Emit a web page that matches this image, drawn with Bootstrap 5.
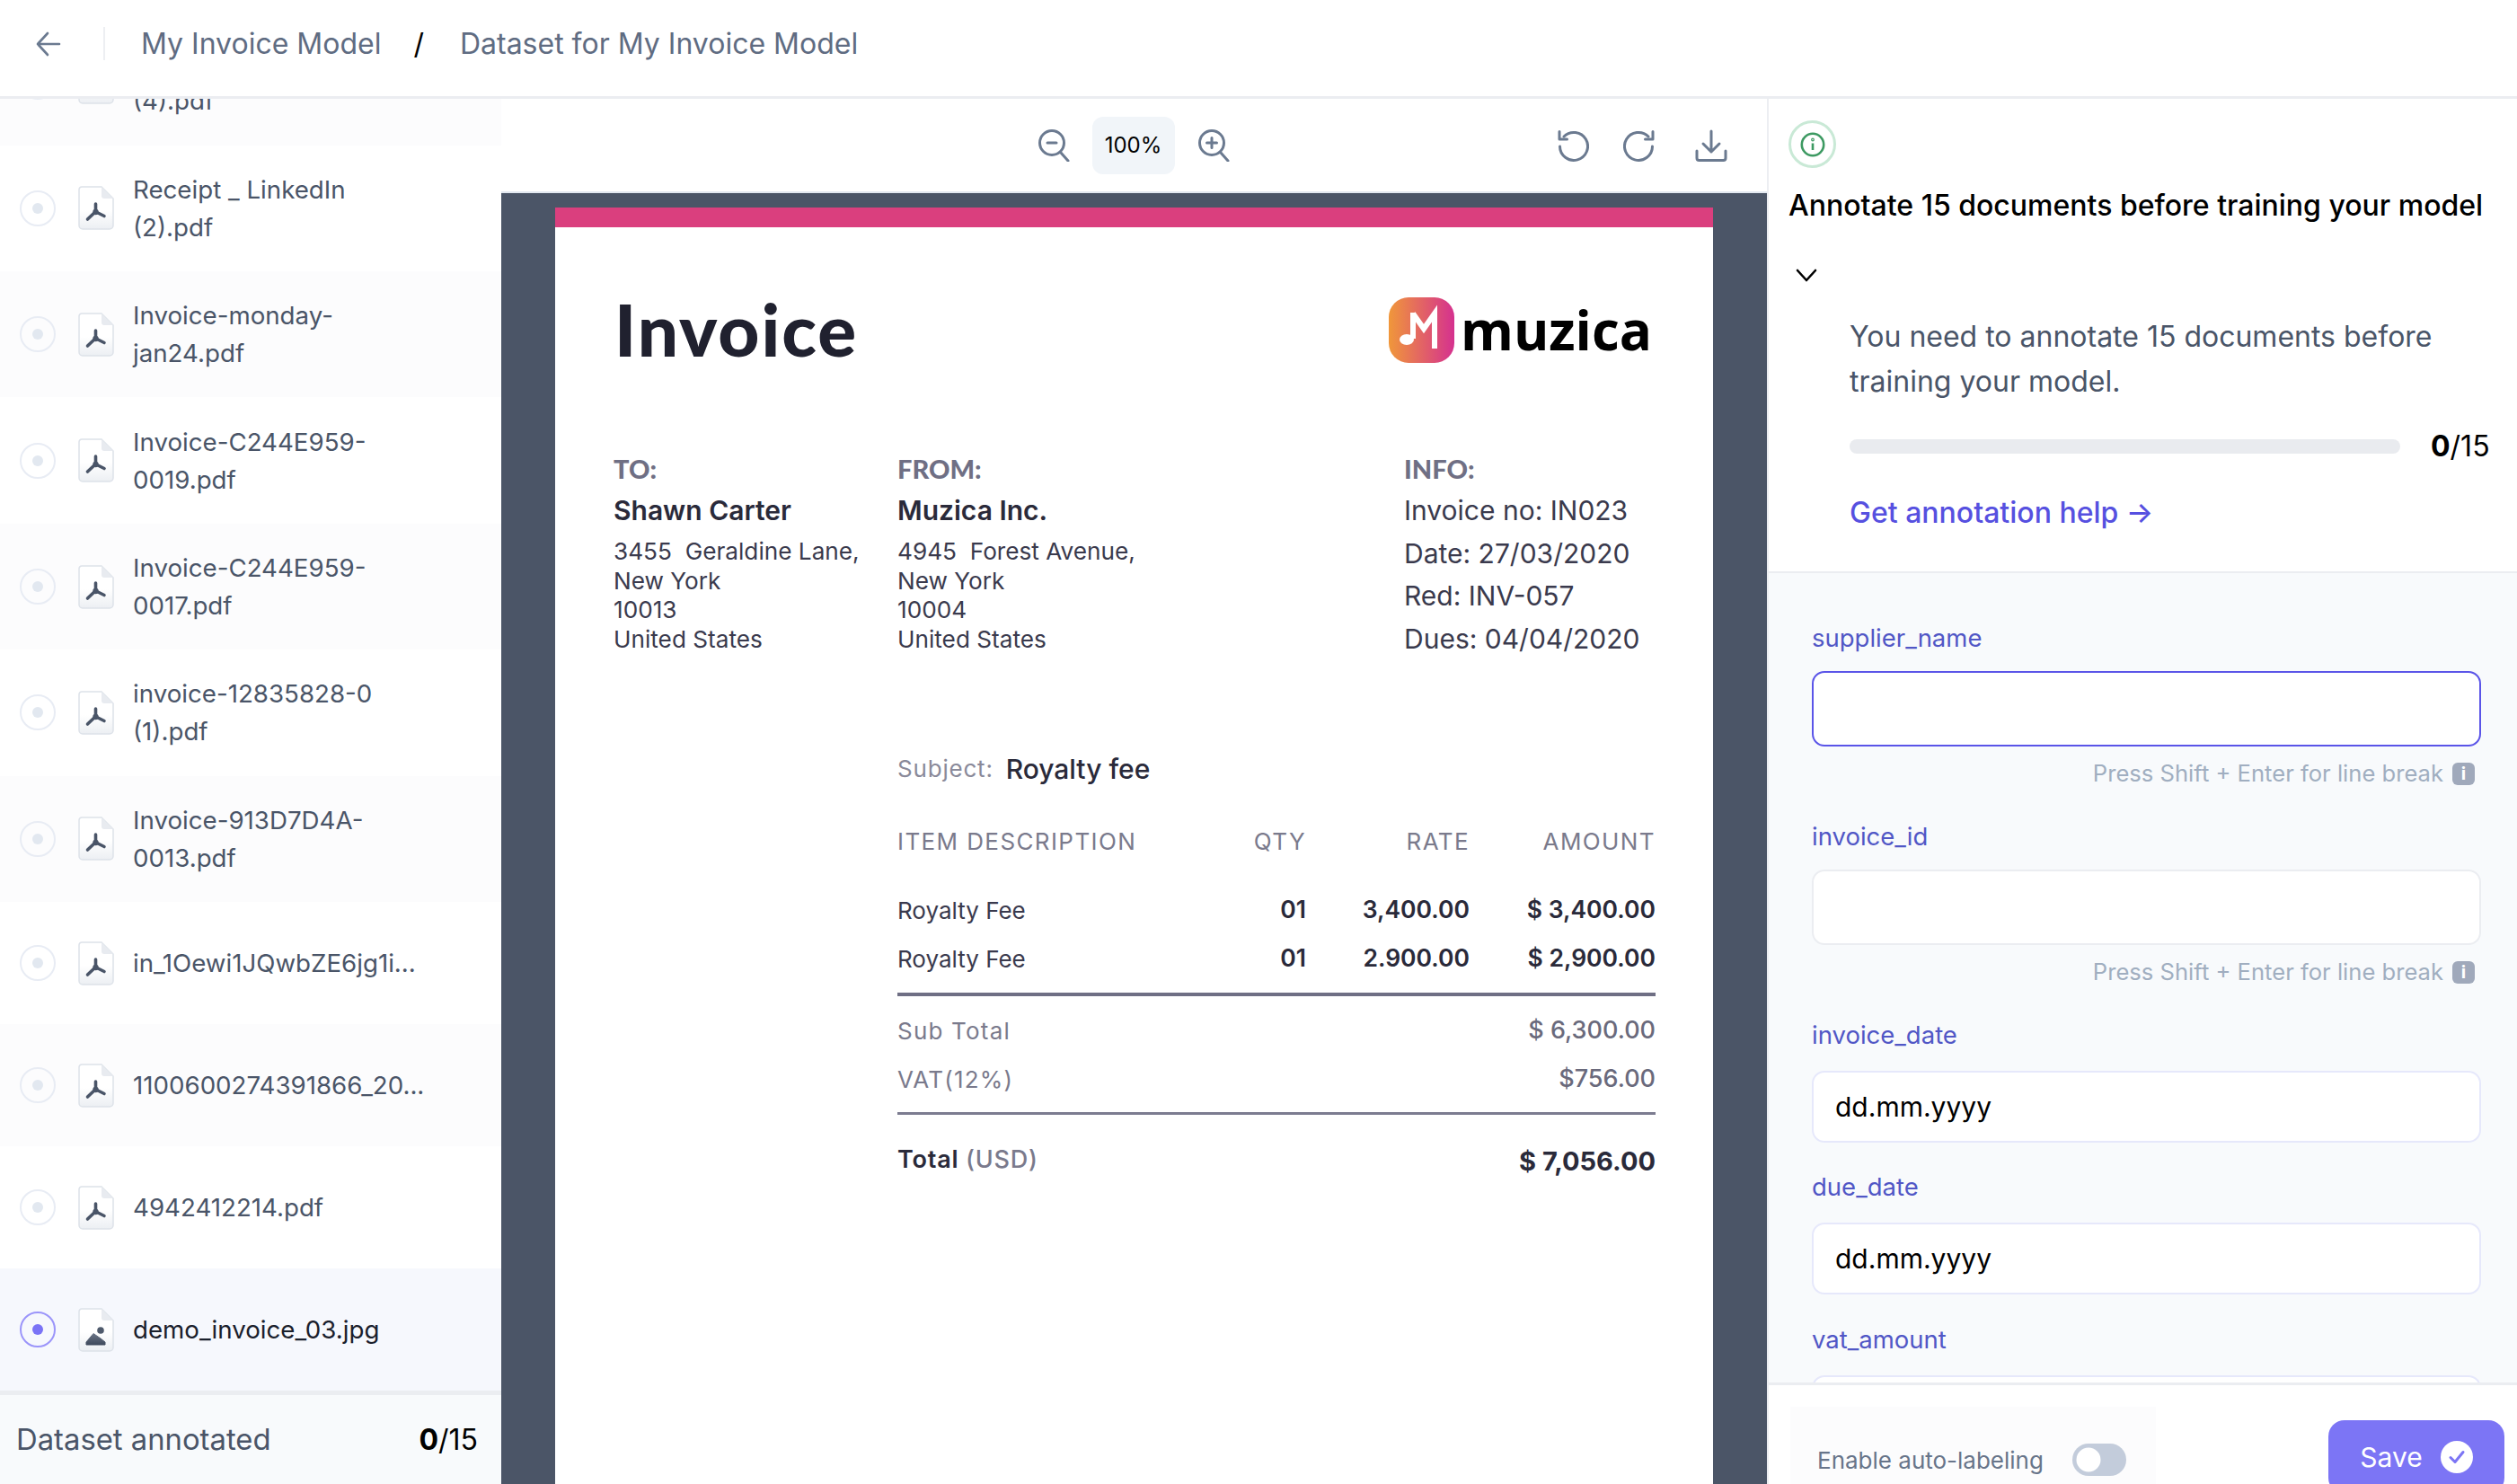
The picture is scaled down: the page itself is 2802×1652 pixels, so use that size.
<!DOCTYPE html>
<html lang="en">
<head>
<meta charset="utf-8">
<title>Dataset for My Invoice Model</title>
<link href="https://cdn.jsdelivr.net/npm/bootstrap@5.3.0/dist/css/bootstrap.min.css" rel="stylesheet">
<style>
body{font-family:Inter,"Liberation Sans",sans-serif;background:#fff;color:#000}
.app-root{height:100vh;width:100%}
.top-bar{height:110px;border-bottom:3px solid #ebedf1;padding:0 0 10px 40px;font-size:32px;color:#5f6c82}
.back-ic{width:28px;height:28px;margin-right:47px}
.top-div{width:2px;height:37px;background:#edeff2;margin-right:40px}
.crumb-sep{color:#000;margin:0 40px 0 36px}
.side-pane{width:558px}
.file-list{min-height:0}
.file-row{min-height:140.4px;padding:0 20px;font-size:27.7px;line-height:42px;color:#4a5568;gap:25px}
.file-row.one-line{min-height:136px}
.file-row.alt{background:#fcfcfd}
.file-row.sel{background:#f6f8fd;color:#1a202c}
.radio-o{width:40px;height:40px;border:2px solid #e8ecf4;border-radius:50%;margin-left:2px;flex:none}
.radio-o i{width:12px;height:12px;border-radius:50%;background:#e2e8f0;display:block}
.sel .radio-o{border-color:#9b95fa}
.sel .radio-o i{background:#7a73f6}
.file-ic{width:40px;height:49px;flex:none}
.file-nm{width:340px;margin-left:-4px}
.file-nm.tail{padding-top:42px}
.side-foot{height:104px;border-top:5px solid #ebedf1;background:#f8fafc;padding:0 26px 0 18px;font-size:32.8px;color:#4a5568}
.count-t{color:#000;font-size:32px}
.mid-pane{min-width:0}
.tool-bar{height:105px;border-bottom:2px solid #e2e8f0;display:grid;grid-template-columns:1fr auto 1fr;padding:0 44px}
.tool-ic{width:36px;height:36px;stroke:#6b7a90;stroke-width:3;fill:none;stroke-linecap:round;stroke-linejoin:round}
.zoom-box{width:92px;height:64px;background:#f1f5f9;border-radius:12px;font-size:24px}
.zoom-grp{gap:25px;margin-right:2px}
.act-grp{gap:38px}
.act-last{margin-left:6px}
.doc-stage{background:#4b5567;padding:16px 60px 0;min-height:0}
.doc-sheet{background:#fff;height:1600px;color:#2d2d3a}
.doc-band{height:22px;background:#da3f7e}
.doc-body{padding:0 64px 0 65px}
.doc-head{padding-top:77px;height:150px}
.doc-title{font-family:Lato,sans-serif;font-weight:900;font-size:80px;line-height:73px;color:#20212f;margin-left:1px;letter-spacing:2px}
.logo-wrap{gap:7px;margin-right:4px;padding-top:1px}
.logo-ic{width:73px;height:73px}
.logo-tx{font-family:"Open Sans",sans-serif;font-weight:700;font-size:60px;line-height:73px;color:#000}
.addr-row{margin-top:99px}
.addr-a{width:316px}.addr-b{width:564px}
.addr-lb{font-family:Lato,sans-serif;font-weight:900;font-size:29px;line-height:40px;color:#6f6f84;margin-bottom:3px}
.addr-nm{font-weight:600;font-size:30px;line-height:47px;color:#2a2a3a;margin-bottom:6px}
.addr-tx{font-size:26.2px;line-height:32.5px;color:#3a3a4d;white-space:pre-wrap}
.info-tx{font-size:30px;line-height:47.5px;color:#3a3a4d}
.bill-wrap{margin:101px 0 0 316px}
.subj-row{line-height:40px;height:40px;gap:14px}
.subj-lb{font-size:26px;letter-spacing:.8px;color:#8a8a9a}
.subj-vl{font-size:30px;font-weight:500;color:#2a2a3a}
.bill-grid{display:grid;grid-template-columns:1fr 100px 182px 207px;align-items:center}
.bill-hd{margin-top:43px;height:67px;align-items:start;font-size:26px;line-height:36px;letter-spacing:1.4px;color:#7a7a8c}
.bill-ln{height:54px;font-size:26px;color:#3a3a4d}
.bill-ln b{font-weight:600;color:#2a2a3a;font-size:26.5px}
.rule-a{height:4px;background:#6f6f84;margin-top:11px}
.rule-b{height:3px;background:#7c7c90;margin-top:10px}
.bill-sum{height:54px;font-size:26px;color:#7a7a8c;letter-spacing:1.2px}
.bill-sum b{color:#6a6a7c;letter-spacing:0;font-weight:500;font-size:27px}
.sub-block{margin-top:11px}
.bill-tot{margin-top:26px;font-size:27px;font-weight:600;color:#2a2a3a;letter-spacing:.8px}
.bill-tot span{font-weight:500;color:#7a7a8c}
.bill-tot b{font-size:29px;font-weight:700;letter-spacing:0;margin-top:4px}
.right-pane{width:835px;border-left:2px solid #eceef2;flex:none}
.hint-box{padding:24px 22px 41px;border-bottom:2px solid #ebedf1}
.info-ring{width:53px;height:53px;border:3px solid #c9e9d6;border-radius:50%}
.hint-title{margin-top:18px;font-size:32px;line-height:48px;font-weight:500;white-space:nowrap;color:#000}
.chev{width:24px;height:15px;margin:46px 0 0 8px;display:block}
.hint-main{padding-left:68px}
.hint-p{margin:36px 0 0;font-size:32px;line-height:49.5px;color:#4a5568}
.prog-row{height:40px;margin-top:28px;gap:34px}
.prog-bar{height:16px;width:613px;background:#e9ebef;border-radius:8px}
.hint-lnk{display:block;margin-top:30px;font-size:32px;line-height:48px;font-weight:500;color:#5650e0;text-decoration:none}
.form-area{background:#f8fafc;padding:52px 40px 0 48px;min-height:0}
.fld-lb{display:block;font-size:27.5px;line-height:40px;color:#5157c6;margin:0}
.fld-in{height:84px;border:2px solid #ebedf1;border-radius:14px;font-size:30px;color:#000;padding:0 24px;background:#fff}
.fld-in.on{border-color:#5a54e8;box-shadow:none}
.fld-in.tint{height:80px;border-color:#e6e8fb}
.fld-g1{margin-top:17px}.fld-g2{margin-top:20px}
.hint-ln{margin-top:12px;height:36px;font-size:25.6px;line-height:36px;color:#a0aec0;gap:10px;padding-right:7px}
.hint-i{width:25px;height:25px;border-radius:6px;background:#a0a9bb;color:#fff;font-size:20px;font-weight:700;line-height:25px;text-align:center}
.fld-gap{margin-top:32px}
.fld-gap-s{margin-top:29px}
.fld-gap-t{margin-top:30px}
.form-foot{height:113px;border-top:3px solid #ebedf1;padding:0 14px 0 24px;background:#fff}
.auto-box{width:407px;height:118px;margin-top:24px;background:#fcfcfd;padding-left:30px;gap:32px;font-size:26px;color:#68758a}
.auto-sw{margin:0;min-height:0;padding:0;line-height:0}
.auto-sw .form-check-input{--bs-form-switch-bg:url("data:image/svg+xml,%3csvg xmlns='http://www.w3.org/2000/svg' viewBox='-4 -4 8 8'%3e%3ccircle r='3' fill='%23fff'/%3e%3c/svg%3e");margin:0;width:60px;height:36px;border:0;background-color:#c3ccdb}
.save-btn{width:196px;height:82px;margin-top:39px;background:#7c75f5;border:0;border-radius:18px;color:#fff;font-size:30px;gap:20px;padding:0}
.save-btn:hover{background:#7c75f5;color:#fff}
</style>
</head>
<body>
<svg width="0" height="0" class="d-block">
  <defs>
    <linearGradient id="pg" x1="0" y1="0" x2="0" y2="1"><stop offset=".55" stop-color="#fff"/><stop offset="1" stop-color="#eceff3"/></linearGradient>
    <linearGradient id="lg" x1="0" y1="0" x2="1" y2="0"><stop offset="0" stop-color="#f0973a"/><stop offset="1" stop-color="#d5318f"/></linearGradient>
    <linearGradient id="mg" x1="0" y1="0" x2="0" y2="1"><stop offset="0" stop-color="#6a7486"/><stop offset="1" stop-color="#3f4a5c"/></linearGradient>
    <symbol id="page" viewBox="0 0 40 49">
      <path d="M4 1H26L39 14V44a4 4 0 0 1-4 4H5a4 4 0 0 1-4-4V4a3 3 0 0 1 3-3Z" fill="url(#pg)" stroke="#dde2e9" stroke-width="1.5"/>
      <path d="M26 1V11a3 3 0 0 0 3 3H39Z" fill="#e8ebf0"/>
    </symbol>
    <symbol id="pdf" viewBox="0 0 40 49">
      <use href="#page"/>
      <path d="M19.5 20V28.5M19 29L10.5 37M20 29L29 33.5" fill="none" stroke="#4a5568" stroke-width="3.6" stroke-linecap="round"/>
      <circle cx="19.5" cy="29" r="3.2" fill="#4a5568"/>
    </symbol>
    <symbol id="imgf" viewBox="0 0 40 49">
      <use href="#page"/>
      <circle cx="25" cy="25" r="3.8" fill="#4f5a6c"/>
      <path d="M9 41V38L17 28.5 25 34 30 38V41Z" fill="url(#mg)" stroke="url(#mg)" stroke-linejoin="round"/>
    </symbol>
  </defs>
</svg>
<div class="app-root d-flex flex-column overflow-hidden">
  <header class="top-bar d-flex align-items-center flex-shrink-0">
    <svg class="back-ic" viewBox="0 0 28 28" fill="none" stroke="#6b7a90" stroke-width="2.6" stroke-linecap="round" stroke-linejoin="round"><path d="M26 14H2M13 2L2 14l11 12"/></svg>
    <span class="top-div"></span>
    <span>My Invoice Model</span><span class="crumb-sep">/</span><span>Dataset for My Invoice Model</span>
  </header>
  <div class="d-flex flex-grow-1 overflow-hidden">
    <aside class="side-pane d-flex flex-column flex-shrink-0">
      <div class="file-list flex-grow-1 d-flex flex-column justify-content-end overflow-hidden">
        <div class="file-row alt d-flex align-items-center flex-shrink-0"><span class="radio-o d-flex align-items-center justify-content-center"><i></i></span><svg class="file-ic"><use href="#pdf"/></svg><span class="file-nm tail">(4).pdf</span></div>
        <div class="file-row d-flex align-items-center flex-shrink-0"><span class="radio-o d-flex align-items-center justify-content-center"><i></i></span><svg class="file-ic"><use href="#pdf"/></svg><span class="file-nm">Receipt _ LinkedIn<br>(2).pdf</span></div>
        <div class="file-row alt d-flex align-items-center flex-shrink-0"><span class="radio-o d-flex align-items-center justify-content-center"><i></i></span><svg class="file-ic"><use href="#pdf"/></svg><span class="file-nm">Invoice-monday-<br>jan24.pdf</span></div>
        <div class="file-row d-flex align-items-center flex-shrink-0"><span class="radio-o d-flex align-items-center justify-content-center"><i></i></span><svg class="file-ic"><use href="#pdf"/></svg><span class="file-nm">Invoice-C244E959-<br>0019.pdf</span></div>
        <div class="file-row alt d-flex align-items-center flex-shrink-0"><span class="radio-o d-flex align-items-center justify-content-center"><i></i></span><svg class="file-ic"><use href="#pdf"/></svg><span class="file-nm">Invoice-C244E959-<br>0017.pdf</span></div>
        <div class="file-row d-flex align-items-center flex-shrink-0"><span class="radio-o d-flex align-items-center justify-content-center"><i></i></span><svg class="file-ic"><use href="#pdf"/></svg><span class="file-nm">invoice-12835828-0<br>(1).pdf</span></div>
        <div class="file-row alt d-flex align-items-center flex-shrink-0"><span class="radio-o d-flex align-items-center justify-content-center"><i></i></span><svg class="file-ic"><use href="#pdf"/></svg><span class="file-nm">Invoice-913D7D4A-<br>0013.pdf</span></div>
        <div class="file-row one-line d-flex align-items-center flex-shrink-0"><span class="radio-o d-flex align-items-center justify-content-center"><i></i></span><svg class="file-ic"><use href="#pdf"/></svg><span class="file-nm">in_1Oewi1JQwbZE6jg1i...</span></div>
        <div class="file-row one-line alt d-flex align-items-center flex-shrink-0"><span class="radio-o d-flex align-items-center justify-content-center"><i></i></span><svg class="file-ic"><use href="#pdf"/></svg><span class="file-nm">1100600274391866_20...</span></div>
        <div class="file-row one-line d-flex align-items-center flex-shrink-0"><span class="radio-o d-flex align-items-center justify-content-center"><i></i></span><svg class="file-ic"><use href="#pdf"/></svg><span class="file-nm">4942412214.pdf</span></div>
        <div class="file-row one-line sel d-flex align-items-center flex-shrink-0"><span class="radio-o d-flex align-items-center justify-content-center"><i></i></span><svg class="file-ic"><use href="#imgf"/></svg><span class="file-nm">demo_invoice_03.jpg</span></div>
      </div>
      <div class="side-foot d-flex align-items-center justify-content-between flex-shrink-0">
        <span>Dataset annotated</span><span class="count-t"><b>0</b>/15</span>
      </div>
    </aside>
    <main class="mid-pane flex-grow-1 d-flex flex-column">
      <div class="tool-bar align-items-center flex-shrink-0">
        <span></span>
        <div class="zoom-grp d-flex align-items-center">
          <svg class="tool-ic" viewBox="0 0 36 36"><circle cx="16" cy="15" r="13.5"/><path d="M26 26l8 9M11 15h10" /></svg>
          <span class="zoom-box d-flex align-items-center justify-content-center">100%</span>
          <svg class="tool-ic" viewBox="0 0 36 36"><circle cx="16" cy="15" r="13.5"/><path d="M26 26l8 9M10.5 15h11M16 9.5v11"/></svg>
        </div>
        <div class="act-grp d-flex align-items-center justify-content-end">
          <svg class="tool-ic" viewBox="0 0 36 36"><path d="M8 8a15.5 15.5 0 1 1-4.5 11"/><path d="M3 2.5V11h8.5"/></svg>
          <svg class="tool-ic" viewBox="0 0 36 36"><path d="M28 8a15.5 15.5 0 1 0 4.5 11"/><path d="M33 2.5V11h-8.5"/></svg>
          <svg class="tool-ic act-last" viewBox="0 0 36 36"><path d="M18 2v23M9 16l9 9 9-9M2 24v8a2.5 2.5 0 0 0 2.5 2.5h27A2.5 2.5 0 0 0 34 32v-8"/></svg>
        </div>
      </div>
      <div class="doc-stage flex-grow-1 overflow-hidden">
        <article class="doc-sheet">
          <div class="doc-band"></div>
          <div class="doc-body">
            <div class="doc-head d-flex justify-content-between">
              <div class="doc-title">Invoice</div>
              <div class="logo-wrap d-flex align-items-start">
                <svg class="logo-ic" viewBox="0 0 73 73"><rect width="73" height="73" rx="22" fill="url(#lg)"/><path d="M27 17V46M27 18L39 35 51 18V57" fill="none" stroke="#fff" stroke-width="6"/><ellipse cx="20" cy="47" rx="8" ry="6" fill="#fff"/></svg>
                <div class="logo-tx">muzica</div>
              </div>
            </div>
            <div class="addr-row d-flex">
              <div class="addr-a"><div class="addr-lb">TO:</div><div class="addr-nm">Shawn Carter</div><div class="addr-tx">3455  Geraldine Lane,
New York
10013
United States</div></div>
              <div class="addr-b"><div class="addr-lb">FROM:</div><div class="addr-nm">Muzica Inc.</div><div class="addr-tx">4945  Forest Avenue,
New York
10004
United States</div></div>
              <div><div class="addr-lb">INFO:</div><div class="info-tx">Invoice no: IN023<br>Date: 27/03/2020<br>Red: INV-057<br>Dues: 04/04/2020</div></div>
            </div>
            <div class="bill-wrap">
              <div class="subj-row d-flex align-items-center"><span class="subj-lb">Subject:</span><span class="subj-vl">Royalty fee</span></div>
              <div class="bill-grid bill-hd"><span>ITEM DESCRIPTION</span><span class="text-end">QTY</span><span class="text-end">RATE</span><span class="text-end">AMOUNT</span></div>
              <div class="bill-grid bill-ln"><span>Royalty Fee</span><b class="text-end">01</b><b class="text-end">3,400.00</b><b class="text-end">$ 3,400.00</b></div>
              <div class="bill-grid bill-ln"><span>Royalty Fee</span><b class="text-end">01</b><b class="text-end">2.900.00</b><b class="text-end">$ 2,900.00</b></div>
              <div class="rule-a"></div>
              <div class="sub-block">
                <div class="bill-sum d-flex align-items-center justify-content-between"><span>Sub Total</span><b>$ 6,300.00</b></div>
                <div class="bill-sum d-flex align-items-center justify-content-between"><span>VAT(12%)</span><b>$756.00</b></div>
              </div>
              <div class="rule-b"></div>
              <div class="bill-tot d-flex align-items-center justify-content-between"><div>Total <span>(USD)</span></div><b>$ 7,056.00</b></div>
            </div>
          </div>
        </article>
      </div>
    </main>
    <aside class="right-pane d-flex flex-column">
      <div class="hint-box flex-shrink-0">
        <div class="info-ring d-flex align-items-center justify-content-center">
          <svg width="28" height="28" viewBox="0 0 28 28" fill="none" stroke="#3d9a62" stroke-width="2.6"><circle cx="14" cy="14" r="12.2"/><path d="M14 12.5V20"/><circle cx="14" cy="8.5" r=".6"/></svg>
        </div>
        <div class="hint-title">Annotate 15 documents before training your model</div>
        <svg class="chev" viewBox="0 0 24 15" fill="none" stroke="#000" stroke-width="2.6" stroke-linecap="round" stroke-linejoin="round"><path d="M2 2l10 11L22 2"/></svg>
        <div class="hint-main">
          <p class="hint-p">You need to annotate 15 documents before training your model.</p>
          <div class="prog-row d-flex align-items-center">
            <div class="progress prog-bar" role="progressbar" aria-valuenow="0" aria-valuemin="0" aria-valuemax="15"></div>
            <span class="count-t"><b>0</b>/15</span>
          </div>
          <a class="hint-lnk" href="#">Get annotation help →</a>
        </div>
      </div>
      <form class="form-area flex-grow-1 overflow-hidden">
        <label class="fld-lb">supplier_name</label>
        <input class="form-control fld-in on fld-g1" type="text">
        <div class="hint-ln d-flex align-items-center justify-content-end"><span>Press Shift + Enter for line break</span><span class="hint-i">i</span></div>
        <label class="fld-lb fld-gap">invoice_id</label>
        <input class="form-control fld-in fld-g1" type="text">
        <div class="hint-ln d-flex align-items-center justify-content-end"><span>Press Shift + Enter for line break</span><span class="hint-i">i</span></div>
        <label class="fld-lb fld-gap">invoice_date</label>
        <input class="form-control fld-in tint fld-g2" type="text" value="dd.mm.yyyy">
        <label class="fld-lb fld-gap-s">due_date</label>
        <input class="form-control fld-in tint fld-g2" type="text" value="dd.mm.yyyy">
        <label class="fld-lb fld-gap-t">vat_amount</label>
        <input class="form-control fld-in tint fld-g2" type="text">
      </form>
      <div class="form-foot d-flex align-items-start justify-content-between overflow-hidden flex-shrink-0">
        <div class="auto-box d-flex align-items-center">
          <span>Enable auto-labeling</span>
          <div class="form-check form-switch auto-sw"><input class="form-check-input" type="checkbox" role="switch" aria-label="Enable auto-labeling"></div>
        </div>
        <button type="button" class="btn save-btn d-flex align-items-center justify-content-center">Save
          <svg width="36" height="36" viewBox="0 0 36 36"><circle cx="18" cy="18" r="18" fill="#fff"/><path d="M11 18.5l5 5 9-11" fill="none" stroke="#7c75f5" stroke-width="3" stroke-linecap="round" stroke-linejoin="round"/></svg>
        </button>
      </div>
    </aside>
  </div>
</div>
</body>
</html>
